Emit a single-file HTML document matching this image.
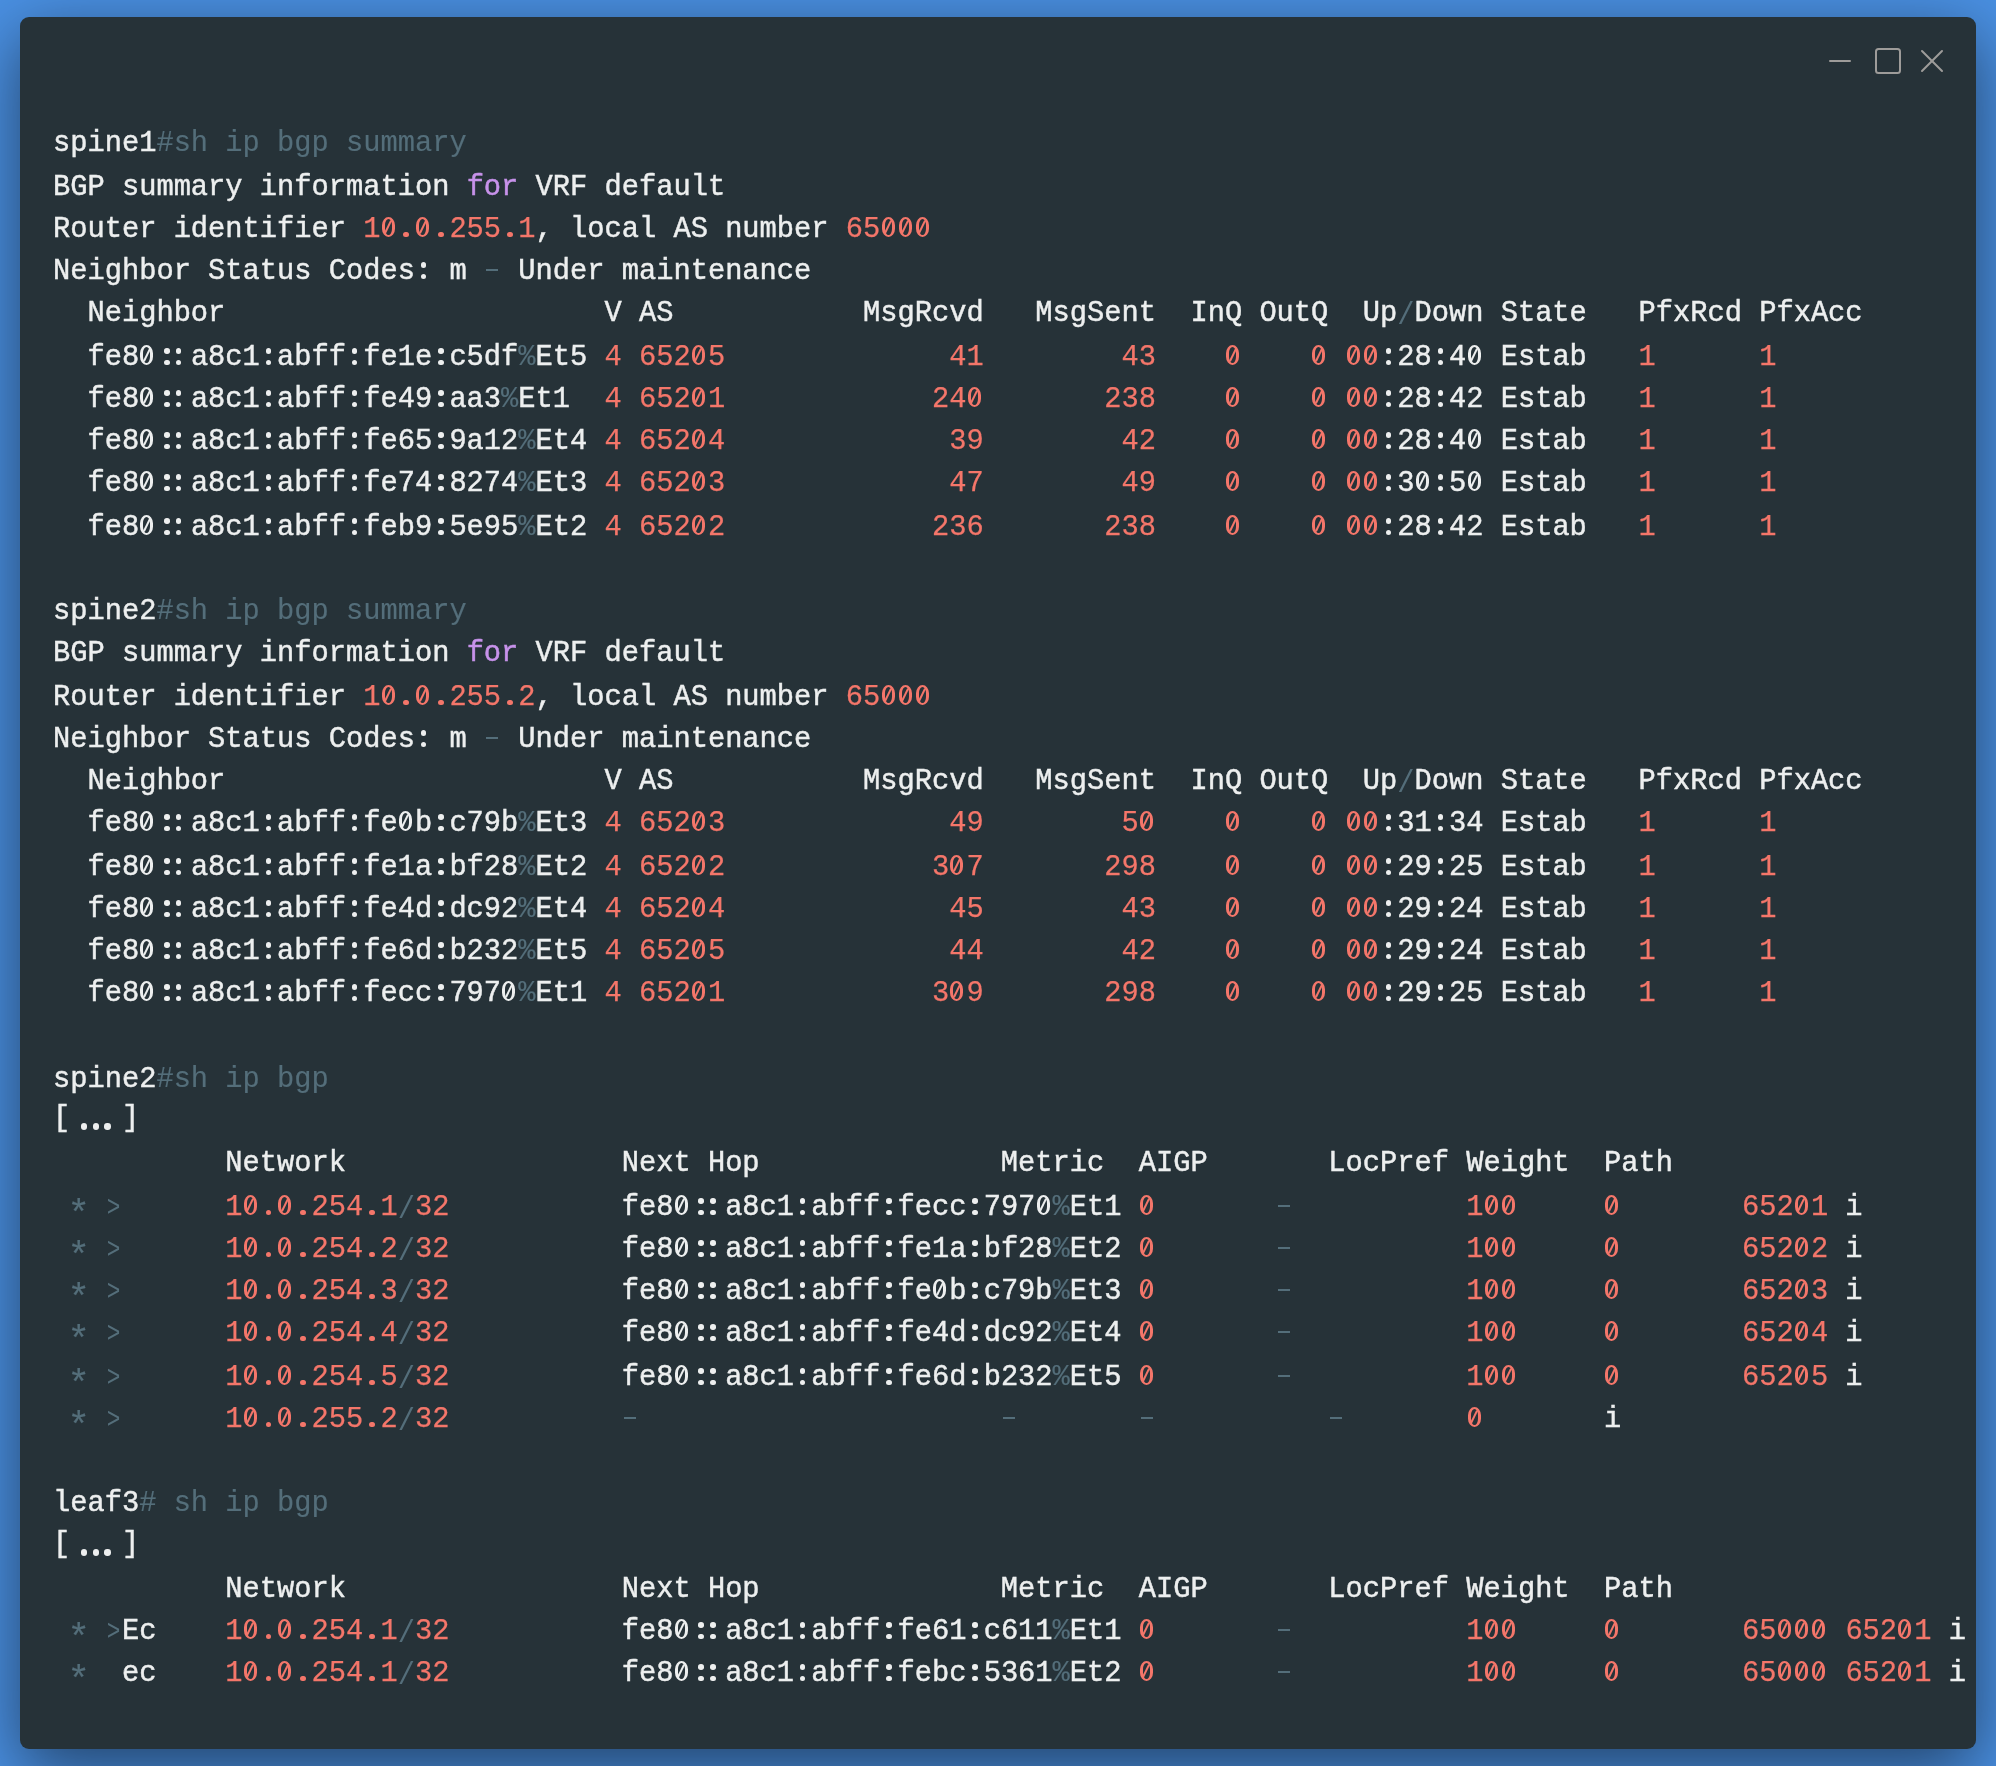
<!DOCTYPE html>
<html><head><meta charset="utf-8">
<style>
html,body{margin:0;padding:0;}
body{width:1996px;height:1766px;overflow:hidden;position:relative;background:#4A90E2;}
.win{position:absolute;left:20px;top:17px;width:1956px;height:1732px;border-radius:9px;background:#263238;box-shadow:0 20px 68px rgba(0,0,0,0.55);}
.code{position:absolute;left:0;top:0;width:1996px;height:1766px;font-family:"Liberation Mono",monospace;font-size:28.73px;color:#EDEFEF;--fg:#EDEFEF;will-change:transform;-webkit-text-stroke:0.45px currentColor;}
.ln{position:absolute;left:53px;height:42px;line-height:42px;white-space:pre;}
.g{color:#546E7A;--fg:#546E7A;-webkit-text-stroke:0.15px currentColor}.r{color:#F4766A;--fg:#F4766A;-webkit-text-stroke:0.25px currentColor}.p{color:#C792EA;--fg:#C792EA}
.c,.d{position:relative;color:transparent;-webkit-text-stroke:0;}
.c::before,.c::after,.d::before{content:"";position:absolute;width:5.6px;height:5.6px;border-radius:50%;background:var(--fg);left:5.8px;}
.c::before{top:7.4px}.c::after{top:18.6px}
.c1::before,.c1::after{left:7.7px}.c2::before,.c2::after{left:2.2px}
.d::before{top:18.5px;width:5.8px;height:5.8px;left:5.7px}
.e1::before,.e2::before,.e3::before{width:6.3px;height:6.3px;top:18.4px}
.e1::before{left:10.9px}.e2::before{left:5.2px}.e3::before{left:-0.5px}
.a{display:inline-block;transform:translateY(8.3px) scale(1.3);}
.b{position:relative;top:-3.5px}
.gt{display:inline-block;transform:translateY(1px) scaleX(0.79);-webkit-text-stroke:0}
.z{position:relative;color:transparent;-webkit-text-stroke:0}
.z::before{content:"";position:absolute;box-sizing:border-box;left:1.3px;top:3.8px;width:13px;height:19.8px;border:solid var(--fg);border-width:2.5px 3px;border-radius:50% / 42%}
.z::after{content:"";position:absolute;left:6.7px;top:6.7px;width:2.2px;height:14px;background:var(--fg);transform:rotate(26deg)}
.h{position:relative;color:transparent;-webkit-text-stroke:0}
.h::before{content:"";position:absolute;left:1.8px;top:13.9px;width:12px;height:2px;background:var(--fg)}
.sl{display:inline-block;transform-origin:50% 5px;transform:scaleY(1.12);-webkit-text-stroke:0}
.ctl{position:absolute;left:0;top:0;}
</style></head><body>
<div class="win">
<svg class="ctl" width="1956" height="100" viewBox="0 0 1956 100">
<g stroke="#9e9c9a" stroke-width="2" fill="none" stroke-linecap="round">
<line x1="1810" y1="44" x2="1830" y2="44"/>
<rect x="1856" y="32" width="24" height="24" rx="2.5"/>
<line x1="1902" y1="34" x2="1922" y2="54"/>
<line x1="1922" y1="34" x2="1902" y2="54"/>
</g></svg>
</div>
<div class="code">
<div class="ln" style="top:123px">spine1<span class="g">#sh ip bgp summary</span></div>
<div class="ln" style="top:167px">BGP summary information <span class="p">for</span> VRF default</div>
<div class="ln" style="top:209px">Router identifier <span class="r">1<span class="z">0</span><span class="d">.</span><span class="z">0</span><span class="d">.</span>255<span class="d">.</span>1</span>, local AS number <span class="r">65<span class="z">0</span><span class="z">0</span><span class="z">0</span></span></div>
<div class="ln" style="top:251px">Neighbor Status Codes<span class="c">:</span> m <span class="g"><span class="h">-</span></span> Under maintenance</div>
<div class="ln" style="top:293px">  Neighbor                      V AS           MsgRcvd   MsgSent  InQ OutQ  Up<span class="g"><span class="sl">/</span></span>Down State   PfxRcd PfxAcc</div>
<div class="ln" style="top:337px">  fe8<span class="z">0</span><span class="c c1">:</span><span class="c c2">:</span>a8c1<span class="c">:</span>abff<span class="c">:</span>fe1e<span class="c">:</span>c5df<span class="g">%</span>Et5 <span class="r">4</span> <span class="r">652<span class="z">0</span>5</span>             <span class="r">41</span>        <span class="r">43</span>    <span class="r"><span class="z">0</span></span>    <span class="r"><span class="z">0</span></span> <span class="r"><span class="z">0</span><span class="z">0</span></span><span class="c">:</span>28<span class="c">:</span>4<span class="z">0</span> Estab   <span class="r">1</span>      <span class="r">1</span></div>
<div class="ln" style="top:379px">  fe8<span class="z">0</span><span class="c c1">:</span><span class="c c2">:</span>a8c1<span class="c">:</span>abff<span class="c">:</span>fe49<span class="c">:</span>aa3<span class="g">%</span>Et1  <span class="r">4</span> <span class="r">652<span class="z">0</span>1</span>            <span class="r">24<span class="z">0</span></span>       <span class="r">238</span>    <span class="r"><span class="z">0</span></span>    <span class="r"><span class="z">0</span></span> <span class="r"><span class="z">0</span><span class="z">0</span></span><span class="c">:</span>28<span class="c">:</span>42 Estab   <span class="r">1</span>      <span class="r">1</span></div>
<div class="ln" style="top:421px">  fe8<span class="z">0</span><span class="c c1">:</span><span class="c c2">:</span>a8c1<span class="c">:</span>abff<span class="c">:</span>fe65<span class="c">:</span>9a12<span class="g">%</span>Et4 <span class="r">4</span> <span class="r">652<span class="z">0</span>4</span>             <span class="r">39</span>        <span class="r">42</span>    <span class="r"><span class="z">0</span></span>    <span class="r"><span class="z">0</span></span> <span class="r"><span class="z">0</span><span class="z">0</span></span><span class="c">:</span>28<span class="c">:</span>4<span class="z">0</span> Estab   <span class="r">1</span>      <span class="r">1</span></div>
<div class="ln" style="top:463px">  fe8<span class="z">0</span><span class="c c1">:</span><span class="c c2">:</span>a8c1<span class="c">:</span>abff<span class="c">:</span>fe74<span class="c">:</span>8274<span class="g">%</span>Et3 <span class="r">4</span> <span class="r">652<span class="z">0</span>3</span>             <span class="r">47</span>        <span class="r">49</span>    <span class="r"><span class="z">0</span></span>    <span class="r"><span class="z">0</span></span> <span class="r"><span class="z">0</span><span class="z">0</span></span><span class="c">:</span>3<span class="z">0</span><span class="c">:</span>5<span class="z">0</span> Estab   <span class="r">1</span>      <span class="r">1</span></div>
<div class="ln" style="top:507px">  fe8<span class="z">0</span><span class="c c1">:</span><span class="c c2">:</span>a8c1<span class="c">:</span>abff<span class="c">:</span>feb9<span class="c">:</span>5e95<span class="g">%</span>Et2 <span class="r">4</span> <span class="r">652<span class="z">0</span>2</span>            <span class="r">236</span>       <span class="r">238</span>    <span class="r"><span class="z">0</span></span>    <span class="r"><span class="z">0</span></span> <span class="r"><span class="z">0</span><span class="z">0</span></span><span class="c">:</span>28<span class="c">:</span>42 Estab   <span class="r">1</span>      <span class="r">1</span></div>
<div class="ln" style="top:549px"></div>
<div class="ln" style="top:591px">spine2<span class="g">#sh ip bgp summary</span></div>
<div class="ln" style="top:633px">BGP summary information <span class="p">for</span> VRF default</div>
<div class="ln" style="top:677px">Router identifier <span class="r">1<span class="z">0</span><span class="d">.</span><span class="z">0</span><span class="d">.</span>255<span class="d">.</span>2</span>, local AS number <span class="r">65<span class="z">0</span><span class="z">0</span><span class="z">0</span></span></div>
<div class="ln" style="top:719px">Neighbor Status Codes<span class="c">:</span> m <span class="g"><span class="h">-</span></span> Under maintenance</div>
<div class="ln" style="top:761px">  Neighbor                      V AS           MsgRcvd   MsgSent  InQ OutQ  Up<span class="g"><span class="sl">/</span></span>Down State   PfxRcd PfxAcc</div>
<div class="ln" style="top:803px">  fe8<span class="z">0</span><span class="c c1">:</span><span class="c c2">:</span>a8c1<span class="c">:</span>abff<span class="c">:</span>fe<span class="z">0</span>b<span class="c">:</span>c79b<span class="g">%</span>Et3 <span class="r">4</span> <span class="r">652<span class="z">0</span>3</span>             <span class="r">49</span>        <span class="r">5<span class="z">0</span></span>    <span class="r"><span class="z">0</span></span>    <span class="r"><span class="z">0</span></span> <span class="r"><span class="z">0</span><span class="z">0</span></span><span class="c">:</span>31<span class="c">:</span>34 Estab   <span class="r">1</span>      <span class="r">1</span></div>
<div class="ln" style="top:847px">  fe8<span class="z">0</span><span class="c c1">:</span><span class="c c2">:</span>a8c1<span class="c">:</span>abff<span class="c">:</span>fe1a<span class="c">:</span>bf28<span class="g">%</span>Et2 <span class="r">4</span> <span class="r">652<span class="z">0</span>2</span>            <span class="r">3<span class="z">0</span>7</span>       <span class="r">298</span>    <span class="r"><span class="z">0</span></span>    <span class="r"><span class="z">0</span></span> <span class="r"><span class="z">0</span><span class="z">0</span></span><span class="c">:</span>29<span class="c">:</span>25 Estab   <span class="r">1</span>      <span class="r">1</span></div>
<div class="ln" style="top:889px">  fe8<span class="z">0</span><span class="c c1">:</span><span class="c c2">:</span>a8c1<span class="c">:</span>abff<span class="c">:</span>fe4d<span class="c">:</span>dc92<span class="g">%</span>Et4 <span class="r">4</span> <span class="r">652<span class="z">0</span>4</span>             <span class="r">45</span>        <span class="r">43</span>    <span class="r"><span class="z">0</span></span>    <span class="r"><span class="z">0</span></span> <span class="r"><span class="z">0</span><span class="z">0</span></span><span class="c">:</span>29<span class="c">:</span>24 Estab   <span class="r">1</span>      <span class="r">1</span></div>
<div class="ln" style="top:931px">  fe8<span class="z">0</span><span class="c c1">:</span><span class="c c2">:</span>a8c1<span class="c">:</span>abff<span class="c">:</span>fe6d<span class="c">:</span>b232<span class="g">%</span>Et5 <span class="r">4</span> <span class="r">652<span class="z">0</span>5</span>             <span class="r">44</span>        <span class="r">42</span>    <span class="r"><span class="z">0</span></span>    <span class="r"><span class="z">0</span></span> <span class="r"><span class="z">0</span><span class="z">0</span></span><span class="c">:</span>29<span class="c">:</span>24 Estab   <span class="r">1</span>      <span class="r">1</span></div>
<div class="ln" style="top:973px">  fe8<span class="z">0</span><span class="c c1">:</span><span class="c c2">:</span>a8c1<span class="c">:</span>abff<span class="c">:</span>fecc<span class="c">:</span>797<span class="z">0</span><span class="g">%</span>Et1 <span class="r">4</span> <span class="r">652<span class="z">0</span>1</span>            <span class="r">3<span class="z">0</span>9</span>       <span class="r">298</span>    <span class="r"><span class="z">0</span></span>    <span class="r"><span class="z">0</span></span> <span class="r"><span class="z">0</span><span class="z">0</span></span><span class="c">:</span>29<span class="c">:</span>25 Estab   <span class="r">1</span>      <span class="r">1</span></div>
<div class="ln" style="top:1017px"></div>
<div class="ln" style="top:1059px">spine2<span class="g">#sh ip bgp</span></div>
<div class="ln" style="top:1101px"><span class="b">[</span><span class="d e1">.</span><span class="d e2">.</span><span class="d e3">.</span><span class="b">]</span></div>
<div class="ln" style="top:1143px">          Network                Next Hop              Metric  AIGP       LocPref Weight  Path</div>
<div class="ln" style="top:1187px"> <span class="g"><span class="a">*</span></span> <span class="g"><span class="gt">&gt;</span></span>      <span class="r">1<span class="z">0</span><span class="d">.</span><span class="z">0</span><span class="d">.</span>254<span class="d">.</span>1</span><span class="g"><span class="sl">/</span></span><span class="r">32</span>          fe8<span class="z">0</span><span class="c c1">:</span><span class="c c2">:</span>a8c1<span class="c">:</span>abff<span class="c">:</span>fecc<span class="c">:</span>797<span class="z">0</span><span class="g">%</span>Et1 <span class="r"><span class="z">0</span></span>       <span class="g"><span class="h">-</span></span>          <span class="r">1<span class="z">0</span><span class="z">0</span></span>     <span class="r"><span class="z">0</span></span>       <span class="r">652<span class="z">0</span>1</span> i</div>
<div class="ln" style="top:1229px"> <span class="g"><span class="a">*</span></span> <span class="g"><span class="gt">&gt;</span></span>      <span class="r">1<span class="z">0</span><span class="d">.</span><span class="z">0</span><span class="d">.</span>254<span class="d">.</span>2</span><span class="g"><span class="sl">/</span></span><span class="r">32</span>          fe8<span class="z">0</span><span class="c c1">:</span><span class="c c2">:</span>a8c1<span class="c">:</span>abff<span class="c">:</span>fe1a<span class="c">:</span>bf28<span class="g">%</span>Et2 <span class="r"><span class="z">0</span></span>       <span class="g"><span class="h">-</span></span>          <span class="r">1<span class="z">0</span><span class="z">0</span></span>     <span class="r"><span class="z">0</span></span>       <span class="r">652<span class="z">0</span>2</span> i</div>
<div class="ln" style="top:1271px"> <span class="g"><span class="a">*</span></span> <span class="g"><span class="gt">&gt;</span></span>      <span class="r">1<span class="z">0</span><span class="d">.</span><span class="z">0</span><span class="d">.</span>254<span class="d">.</span>3</span><span class="g"><span class="sl">/</span></span><span class="r">32</span>          fe8<span class="z">0</span><span class="c c1">:</span><span class="c c2">:</span>a8c1<span class="c">:</span>abff<span class="c">:</span>fe<span class="z">0</span>b<span class="c">:</span>c79b<span class="g">%</span>Et3 <span class="r"><span class="z">0</span></span>       <span class="g"><span class="h">-</span></span>          <span class="r">1<span class="z">0</span><span class="z">0</span></span>     <span class="r"><span class="z">0</span></span>       <span class="r">652<span class="z">0</span>3</span> i</div>
<div class="ln" style="top:1313px"> <span class="g"><span class="a">*</span></span> <span class="g"><span class="gt">&gt;</span></span>      <span class="r">1<span class="z">0</span><span class="d">.</span><span class="z">0</span><span class="d">.</span>254<span class="d">.</span>4</span><span class="g"><span class="sl">/</span></span><span class="r">32</span>          fe8<span class="z">0</span><span class="c c1">:</span><span class="c c2">:</span>a8c1<span class="c">:</span>abff<span class="c">:</span>fe4d<span class="c">:</span>dc92<span class="g">%</span>Et4 <span class="r"><span class="z">0</span></span>       <span class="g"><span class="h">-</span></span>          <span class="r">1<span class="z">0</span><span class="z">0</span></span>     <span class="r"><span class="z">0</span></span>       <span class="r">652<span class="z">0</span>4</span> i</div>
<div class="ln" style="top:1357px"> <span class="g"><span class="a">*</span></span> <span class="g"><span class="gt">&gt;</span></span>      <span class="r">1<span class="z">0</span><span class="d">.</span><span class="z">0</span><span class="d">.</span>254<span class="d">.</span>5</span><span class="g"><span class="sl">/</span></span><span class="r">32</span>          fe8<span class="z">0</span><span class="c c1">:</span><span class="c c2">:</span>a8c1<span class="c">:</span>abff<span class="c">:</span>fe6d<span class="c">:</span>b232<span class="g">%</span>Et5 <span class="r"><span class="z">0</span></span>       <span class="g"><span class="h">-</span></span>          <span class="r">1<span class="z">0</span><span class="z">0</span></span>     <span class="r"><span class="z">0</span></span>       <span class="r">652<span class="z">0</span>5</span> i</div>
<div class="ln" style="top:1399px"> <span class="g"><span class="a">*</span></span> <span class="g"><span class="gt">&gt;</span></span>      <span class="r">1<span class="z">0</span><span class="d">.</span><span class="z">0</span><span class="d">.</span>255<span class="d">.</span>2</span><span class="g"><span class="sl">/</span></span><span class="r">32</span>          <span class="g"><span class="h">-</span></span>                     <span class="g"><span class="h">-</span></span>       <span class="g"><span class="h">-</span></span>          <span class="g"><span class="h">-</span></span>       <span class="r"><span class="z">0</span></span>       i</div>
<div class="ln" style="top:1441px"></div>
<div class="ln" style="top:1483px">leaf3<span class="g"># sh ip bgp</span></div>
<div class="ln" style="top:1527px"><span class="b">[</span><span class="d e1">.</span><span class="d e2">.</span><span class="d e3">.</span><span class="b">]</span></div>
<div class="ln" style="top:1569px">          Network                Next Hop              Metric  AIGP       LocPref Weight  Path</div>
<div class="ln" style="top:1611px"> <span class="g"><span class="a">*</span></span> <span class="g"><span class="gt">&gt;</span></span>Ec    <span class="r">1<span class="z">0</span><span class="d">.</span><span class="z">0</span><span class="d">.</span>254<span class="d">.</span>1</span><span class="g"><span class="sl">/</span></span><span class="r">32</span>          fe8<span class="z">0</span><span class="c c1">:</span><span class="c c2">:</span>a8c1<span class="c">:</span>abff<span class="c">:</span>fe61<span class="c">:</span>c611<span class="g">%</span>Et1 <span class="r"><span class="z">0</span></span>       <span class="g"><span class="h">-</span></span>          <span class="r">1<span class="z">0</span><span class="z">0</span></span>     <span class="r"><span class="z">0</span></span>       <span class="r">65<span class="z">0</span><span class="z">0</span><span class="z">0</span></span> <span class="r">652<span class="z">0</span>1</span> i</div>
<div class="ln" style="top:1653px"> <span class="g"><span class="a">*</span></span>  ec    <span class="r">1<span class="z">0</span><span class="d">.</span><span class="z">0</span><span class="d">.</span>254<span class="d">.</span>1</span><span class="g"><span class="sl">/</span></span><span class="r">32</span>          fe8<span class="z">0</span><span class="c c1">:</span><span class="c c2">:</span>a8c1<span class="c">:</span>abff<span class="c">:</span>febc<span class="c">:</span>5361<span class="g">%</span>Et2 <span class="r"><span class="z">0</span></span>       <span class="g"><span class="h">-</span></span>          <span class="r">1<span class="z">0</span><span class="z">0</span></span>     <span class="r"><span class="z">0</span></span>       <span class="r">65<span class="z">0</span><span class="z">0</span><span class="z">0</span></span> <span class="r">652<span class="z">0</span>1</span> i</div>
</div>
</body></html>
